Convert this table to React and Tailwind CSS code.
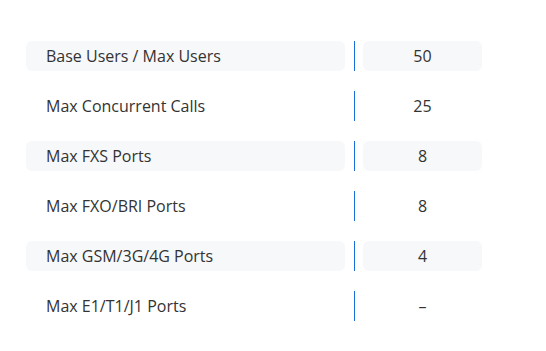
const rows = [
  ['Base Users / Max Users', '50'],
  ['Max Concurrent Calls', '25'],
  ['Max FXS Ports', '8'],
  ['Max FXO/BRI Ports', '8'],
  ['Max GSM/3G/4G Ports', '4'],
  ['Max E1/T1/J1 Ports', '–'],
]

export default function App() {
  return (
    <div className="min-h-[351px] w-[546px] bg-white pt-[41px] pl-[26px] font-['Open_Sans',sans-serif] text-base text-[#333]">
      <div className="flex w-[456px] flex-col gap-5">
        {rows.map(([label, value], i) => (
          <div key={label} className="flex h-[30px] items-center">
            <div className={`flex h-full w-[319px] items-center rounded-md pl-5 ${i % 2 === 0 ? 'bg-[#f7f8fa]' : ''}`}>{label}</div>
            <div className="ml-[9px] h-full w-px bg-[#1a6fd6]" />
            <div className={`ml-2 flex h-full w-[119px] items-center justify-center rounded-md ${i % 2 === 0 ? 'bg-[#f7f8fa]' : ''}`}>{value}</div>
          </div>
        ))}
      </div>
    </div>
  )
}
